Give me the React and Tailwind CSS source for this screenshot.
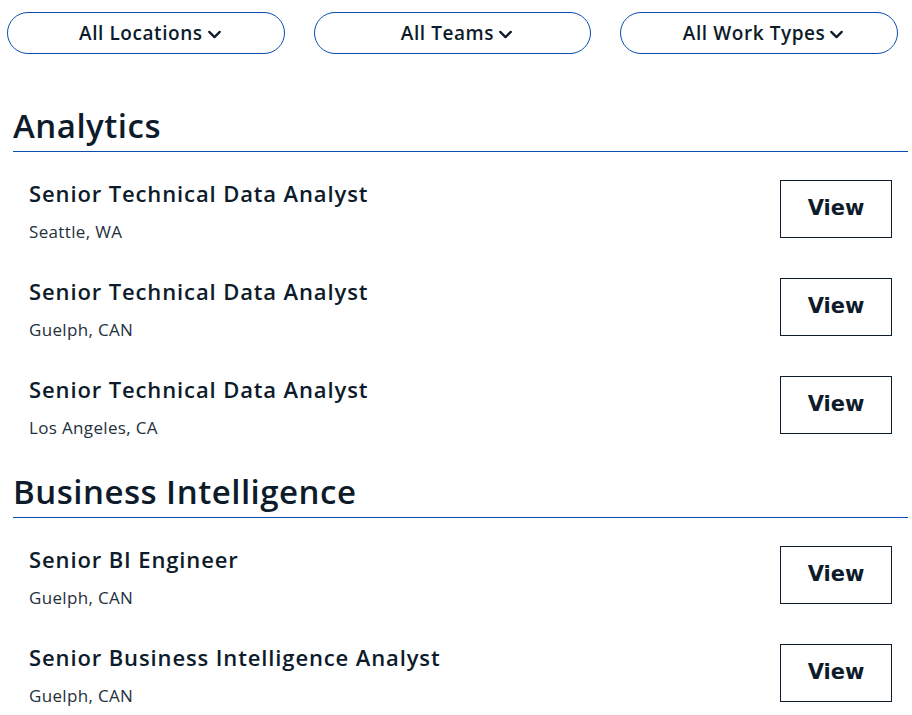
import { ChevronDown } from 'lucide-react';

const sections = [
  {
    name: 'Analytics',
    jobs: [
      { title: 'Senior Technical Data Analyst', location: 'Seattle, WA' },
      { title: 'Senior Technical Data Analyst', location: 'Guelph, CAN' },
      { title: 'Senior Technical Data Analyst', location: 'Los Angeles, CA' },
    ],
  },
  {
    name: 'Business Intelligence',
    jobs: [
      { title: 'Senior BI Engineer', location: 'Guelph, CAN' },
      { title: 'Senior Business Intelligence Analyst', location: 'Guelph, CAN' },
    ],
  },
];

const filters = ['All Locations', 'All Teams', 'All Work Types'];

function FilterButton({ label }) {
  return (
    <button className="flex h-[42px] items-center justify-center rounded-full border border-[#0b4eb0] bg-white pl-[12px] text-[19px] font-semibold tracking-[0.03em] text-[#0d1b2a]">
      {label}
      <ChevronDown size={21} strokeWidth={2.6} className="ml-[1px] mt-[3px]" />
    </button>
  );
}

function JobRow({ title, location }) {
  return (
    <div className="flex h-[98px] items-center justify-between pl-[16px] pr-[16px]">
      <div className="mt-[5px]">
        <p className="text-[22px] font-semibold leading-[28px] tracking-[0.04em] text-[#0d1b2a]">{title}</p>
        <p className="mt-[13px] text-[17px] leading-[24px] tracking-[0.02em] text-[#24303c]">{location}</p>
      </div>
      <button className="h-[58px] w-[112px] border border-[#0d1b2a] bg-white font-['DejaVu_Sans',sans-serif] text-[21px] font-bold text-[#0d1b2a]">
        View
      </button>
    </div>
  );
}

export default function App() {
  return (
    <div className="min-h-screen bg-white font-['Open_Sans',sans-serif]">
      <div className="grid grid-cols-3 gap-[29px] pl-[7px] pr-[14px] pt-[12px]">
        {filters.map((f) => (
          <FilterButton key={f} label={f} />
        ))}
      </div>
      <div className="pl-[13px] pr-[4px] pt-[52px]">
        {sections.map((s, i) => (
          <section key={s.name} className={i > 0 ? 'mt-[18px]' : ''}>
            <h2 className="border-b border-[#0b4eb0] pb-[5px] text-[33px] font-semibold leading-[40px] tracking-[0.015em] text-[#0d1b2a]">
              {s.name}
            </h2>
            <div className="pt-[8px]">
              {s.jobs.map((j, k) => (
                <JobRow key={k} {...j} />
              ))}
            </div>
          </section>
        ))}
      </div>
    </div>
  );
}
